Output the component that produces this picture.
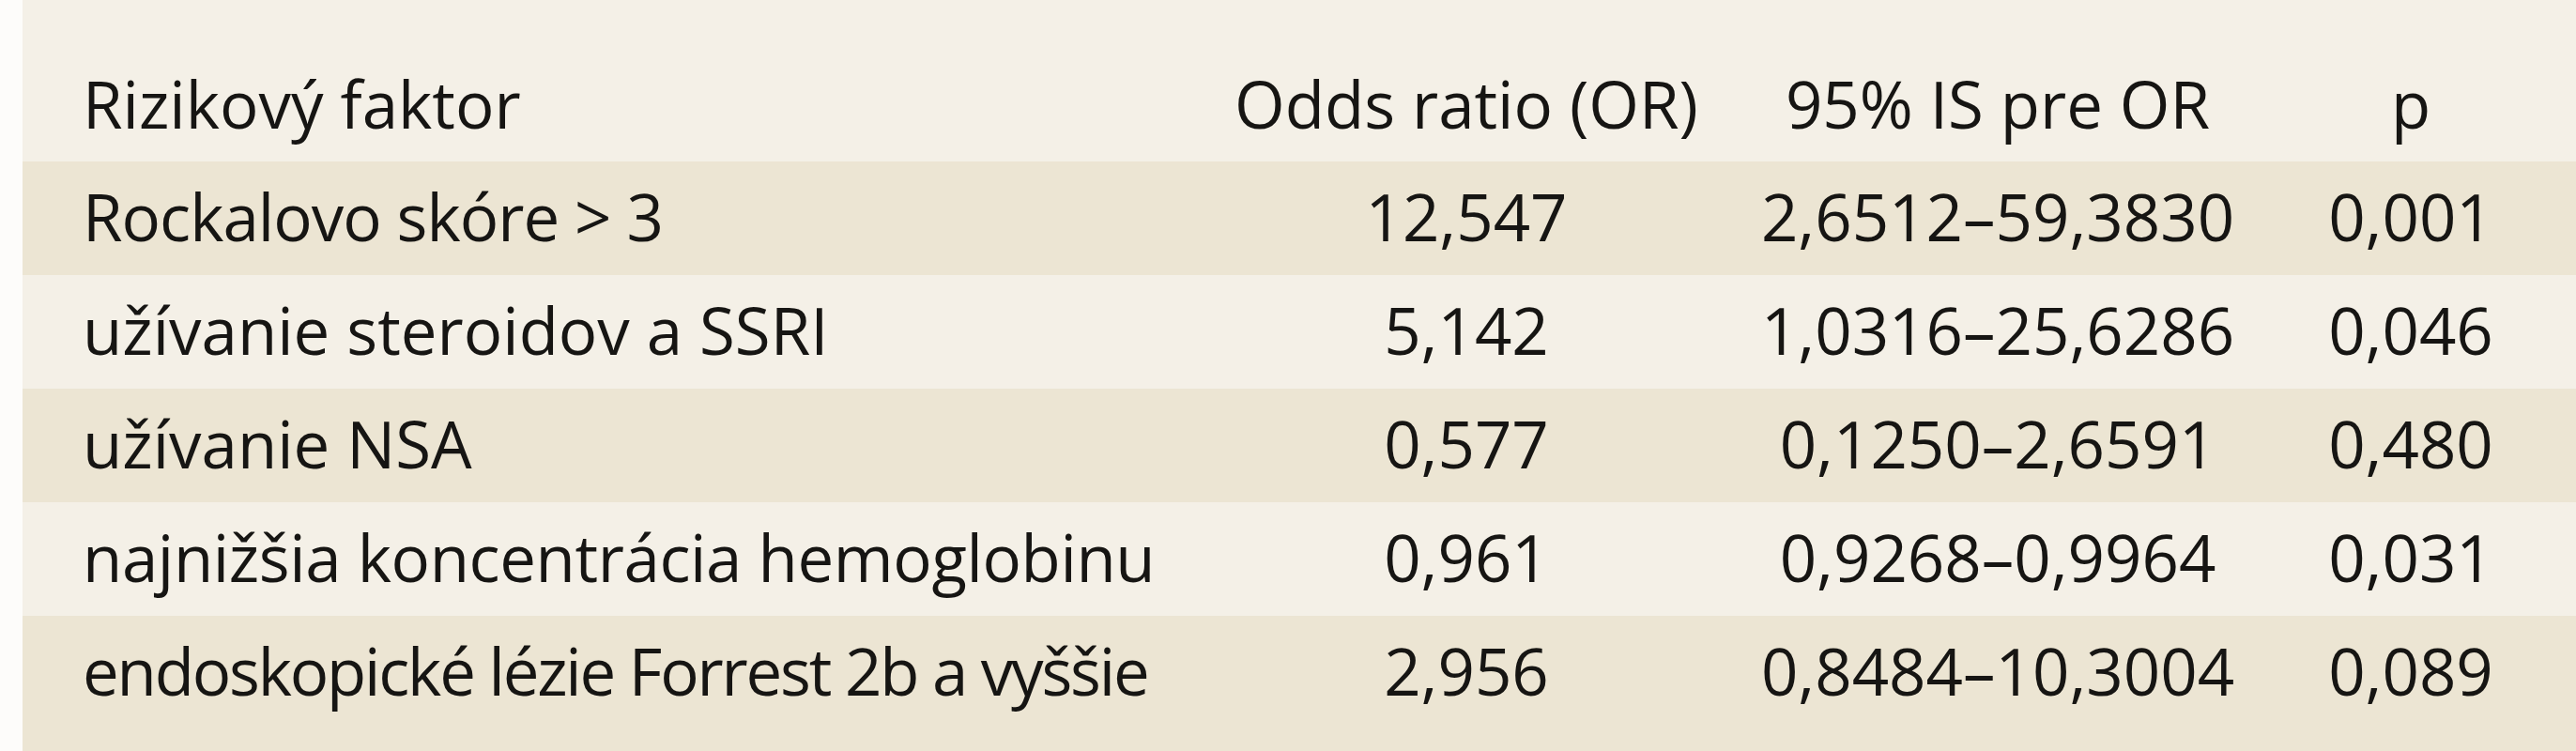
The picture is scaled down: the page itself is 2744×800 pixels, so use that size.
import React from 'react';

type Row = {
  factor: string;
  or: string;
  ci: string;
  p: string;
  track: string;
};

// tracking per row: the source font is narrower in some words than Open Sans
const rows: Row[] = [
  { factor: 'Rockalovo skóre > 3', or: '12,547', ci: '2,6512–59,3830', p: '0,001', track: 'tracking-[-1px]' },
  { factor: 'užívanie steroidov a SSRI', or: '5,142', ci: '1,0316–25,6286', p: '0,046', track: 'tracking-normal' },
  { factor: 'užívanie NSA', or: '0,577', ci: '0,1250–2,6591', p: '0,480', track: 'tracking-normal' },
  { factor: 'najnižšia koncentrácia hemoglobinu', or: '0,961', ci: '0,9268–0,9964', p: '0,031', track: 'tracking-[-0.4px]' },
  { factor: 'endoskopické lézie Forrest 2b a vyššie', or: '2,956', ci: '0,8484–10,3004', p: '0,089', track: 'tracking-[-2.2px]' },
];

const cols = 'grid grid-cols-[1236px_604px_528px_352px]';

const App: React.FC = () => {
  return (
    <div className="w-[2744px] h-[800px] bg-[#fdfcfa] pl-[24px] overflow-hidden font-['Open_Sans',sans-serif] text-[69px] text-[#161513]">
      <div className="h-full bg-[#ece5d3]">
        {/* header */}
        <div className={`${cols} bg-[#f4f0e7] pt-[52px] pb-[4px] leading-[116px]`}>
          <div className="pl-[64px]">Rizikový faktor</div>
          <div className="text-center">Odds ratio (OR)</div>
          <div className="text-center">95% IS pre OR</div>
          <div className="text-center">p</div>
        </div>

        {rows.map((r, i) => (
          <div
            key={r.factor}
            className={`${cols} pb-[4px] leading-[117px] ${i % 2 === 0 ? 'bg-[#ece5d3]' : 'bg-[#f4f0e7]'}`}
          >
            <div className={`pl-[64px] whitespace-nowrap ${r.track}`}>{r.factor}</div>
            <div className="text-center">{r.or}</div>
            <div className="text-center whitespace-nowrap">{r.ci}</div>
            <div className="text-center">{r.p}</div>
          </div>
        ))}
      </div>
    </div>
  );
};

export default App;
